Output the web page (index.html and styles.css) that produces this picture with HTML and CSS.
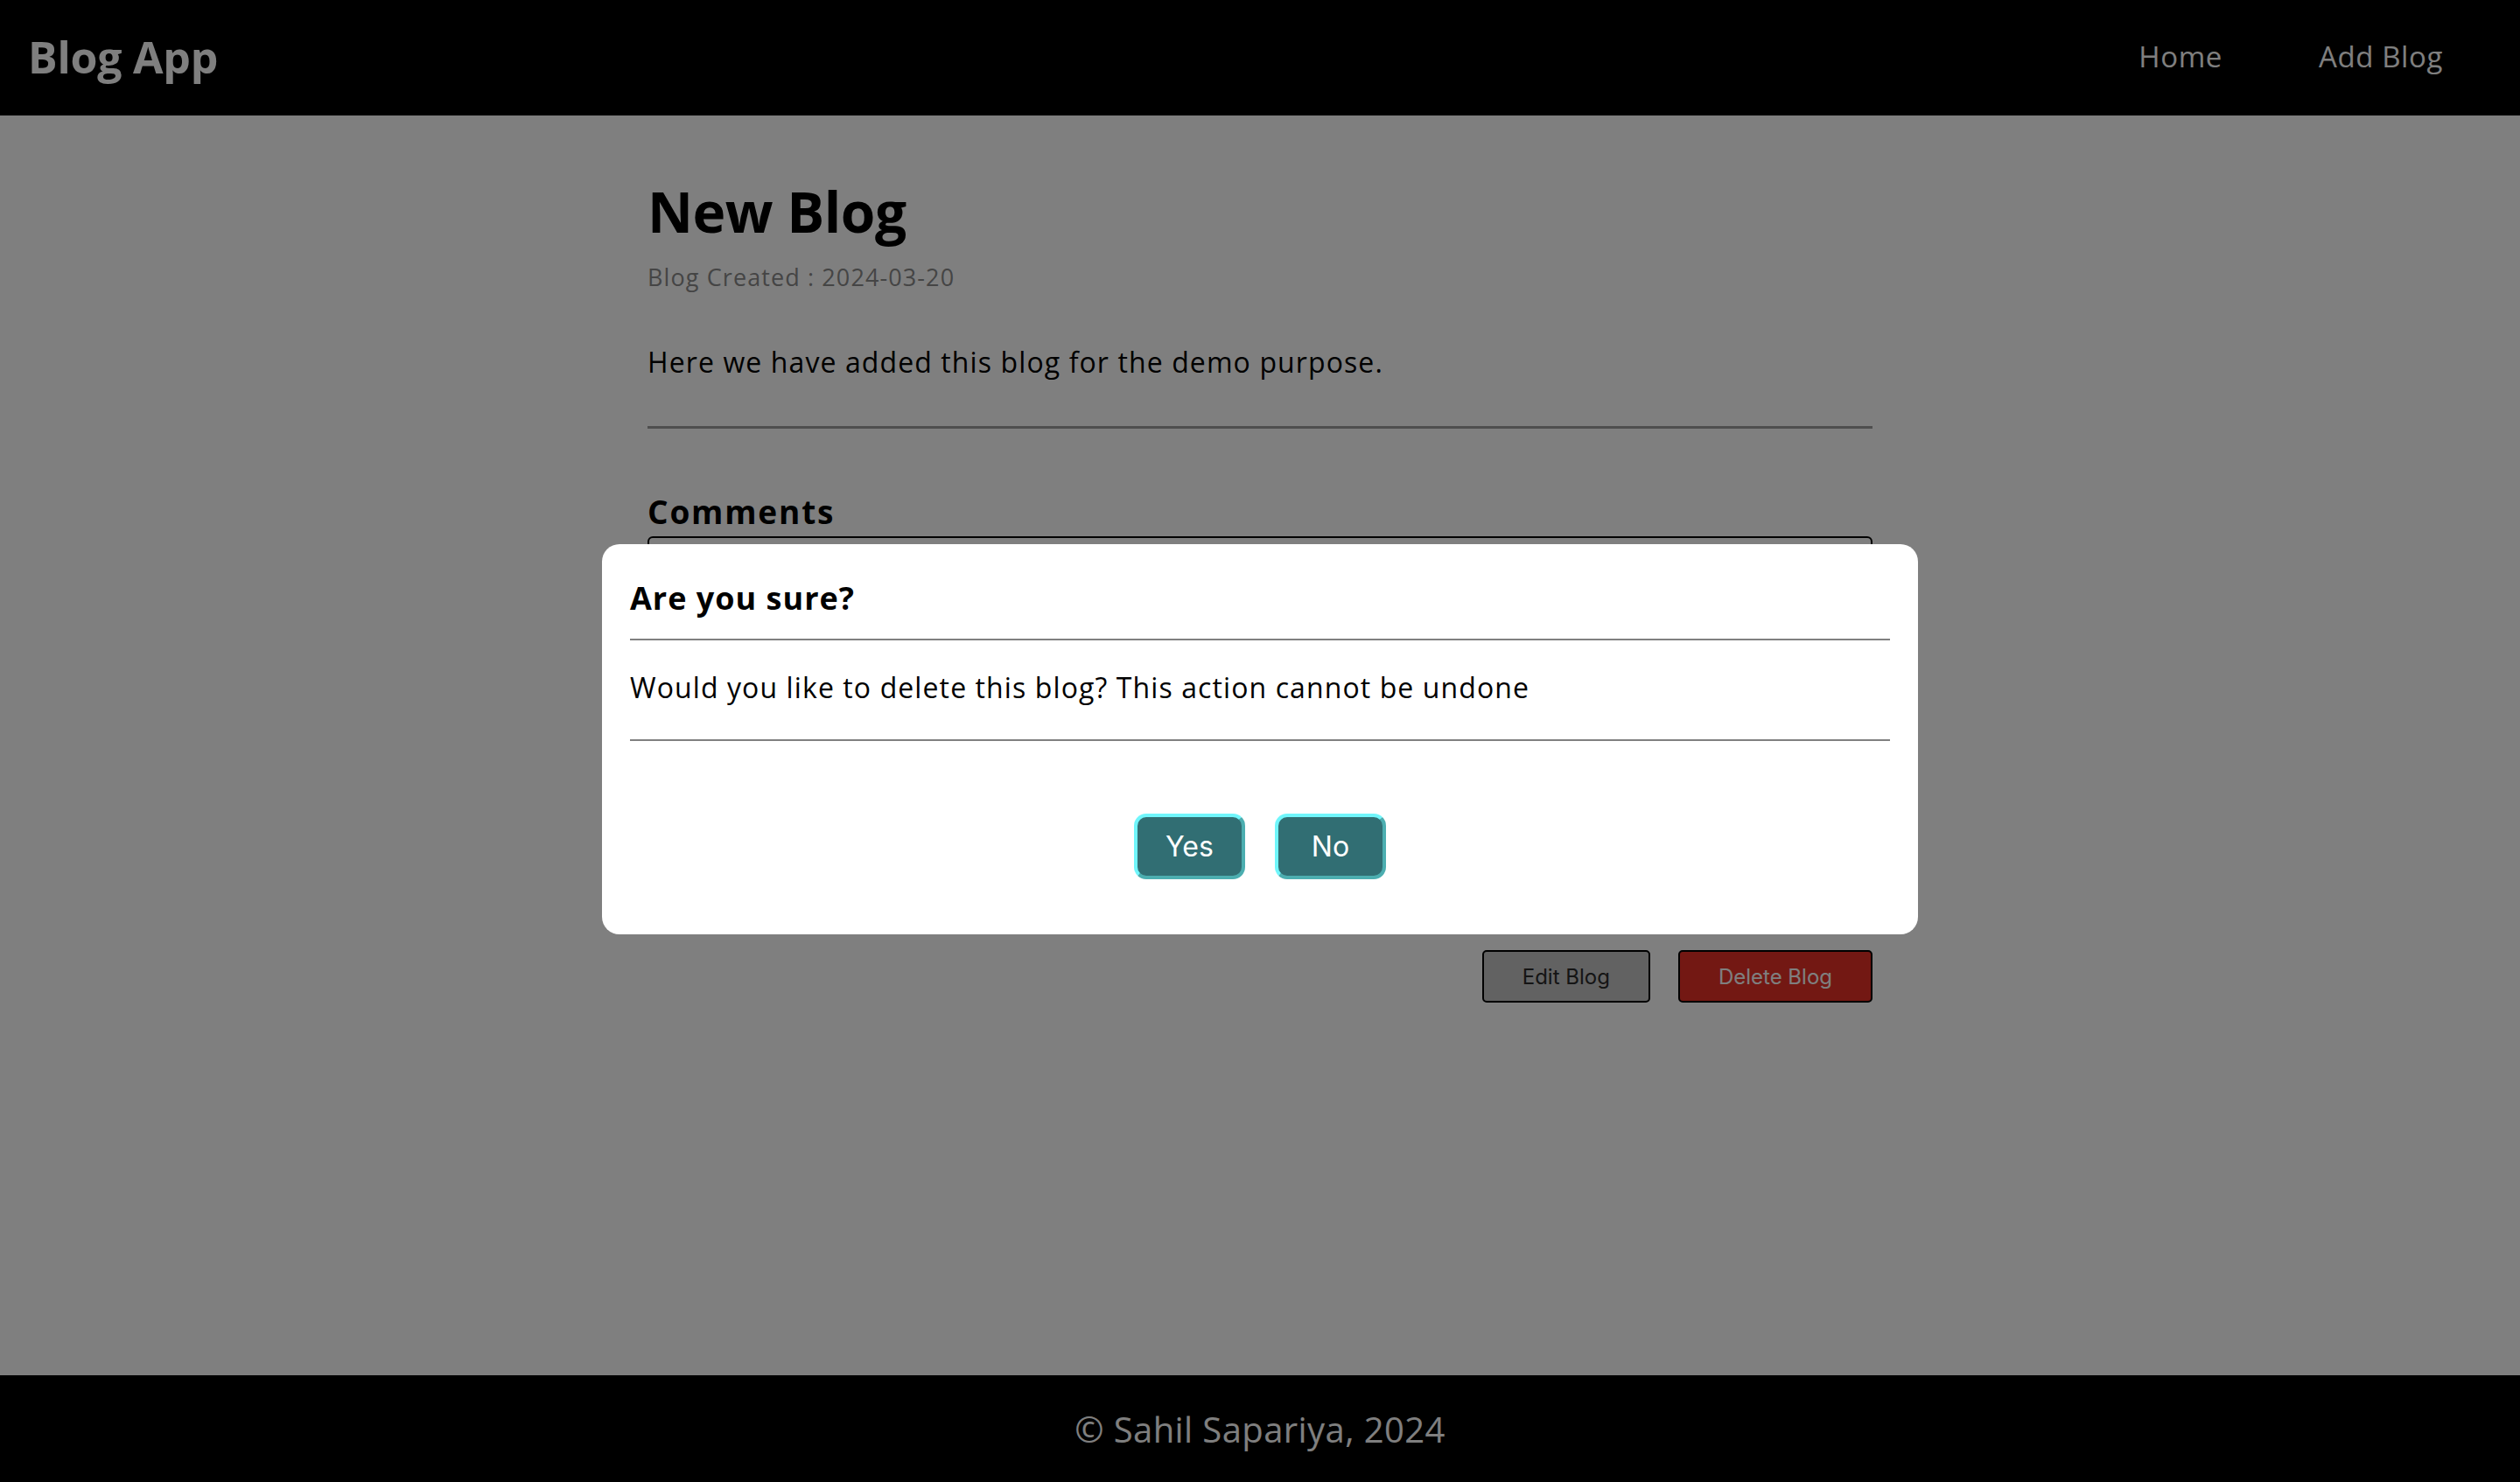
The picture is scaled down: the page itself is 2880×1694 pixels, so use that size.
FILE: index.html
```html
<!DOCTYPE html>
<html lang="en">
<head>
<meta charset="utf-8">
<title>Blog App</title>
<link rel="stylesheet" href="styles.css">
</head>
<body>
<header class="topbar">
  <a class="logo" href="#">Blog App</a>
  <nav class="nav">
    <a href="#">Home</a>
    <a href="#">Add Blog</a>
  </nav>
</header>
<main class="main">
  <article class="post">
    <h1 class="post-title">New Blog</h1>
    <p class="post-date">Blog Created : 2024-03-20</p>
    <p class="post-body">Here we have added this blog for the demo purpose.</p>
    <hr class="divider">
    <h3 class="comments-title">Comments</h3>
    <div class="comments-box"></div>
    <div class="post-actions">
      <button class="btn btn-edit">Edit Blog</button>
      <button class="btn btn-delete">Delete Blog</button>
    </div>
  </article>
</main>
<footer class="footer">© Sahil Sapariya, 2024</footer>

<div class="overlay">
  <div class="modal">
    <h3 class="modal-title">Are you sure?</h3>
    <p class="modal-text">Would you like to delete this blog? This action cannot be undone</p>
    <div class="modal-actions">
      <button class="mbtn">Yes</button>
      <button class="mbtn">No</button>
    </div>
  </div>
</div>
</body>
</html>
```
FILE: styles.css
```css
* { box-sizing: border-box; }
html, body { margin: 0; padding: 0; }
body {
  font-family: "Open Sans", "Noto Sans", sans-serif;
  background: #ffffff;
  color: #000;
  min-height: 100vh;
  display: flex;
  flex-direction: column;
}
.topbar {
  height: 132px;
  background: #000;
  display: flex;
  align-items: center;
  justify-content: space-between;
  padding: 0 88px 3px 32px;
}
.logo {
  color: #fff;
  text-decoration: none;
  font-weight: 700;
  font-size: 50px;
  letter-spacing: -0.2px;
}
.nav { display: flex; gap: 110px; }
.nav a {
  color: #fff;
  text-decoration: none;
  font-size: 33px;
  letter-spacing: 0.6px;
}
.main { flex: 1; }
.post {
  width: 1400px;
  margin: 0 auto;
  padding-top: 62px;
}
.post-title {
  margin: 0;
  font-size: 64px;
  line-height: 96px;
  font-weight: 700;
  letter-spacing: -0.5px;
}
.post-date {
  margin: 8px 0 0;
  font-size: 27px;
  line-height: 38.4px;
  letter-spacing: 1.1px;
  color: #8a8a8a;
}
.post-body {
  margin: 54px 0 0;
  font-size: 32px;
  line-height: 48px;
  letter-spacing: 1.1px;
}
.divider {
  margin: 49px 0 0;
  border: 0;
  border-top: 3px solid #9c9c9c;
  height: 0;
}
.comments-title {
  margin: 68px 0 0;
  font-size: 37px;
  line-height: 54px;
  font-weight: 700;
  letter-spacing: 1.8px;
}
.comments-box {
  margin-top: 1px;
  height: 420px;
  border: 2px solid #000;
  border-radius: 6px;
}
.post-actions {
  display: flex;
  justify-content: flex-end;
  gap: 32px;
  margin-top: 53px;
}
.btn {
  height: 60px;
  padding: 0 44px;
  border: 2px solid #000;
  border-radius: 5px;
  font-family: Inter, "Liberation Sans", sans-serif;
  font-size: 24px;
}
.btn-edit { background: #c4c4c4; color: #2a2a2a; }
.btn-delete { background: #e63026; color: #fff; }
.footer {
  height: 122px;
  background: #000;
  color: #fff;
  display: flex;
  align-items: center;
  justify-content: center;
  font-size: 40px;
  letter-spacing: 0.4px;
}
.overlay {
  position: fixed;
  inset: 0;
  background: rgba(0, 0, 0, 0.5);
  display: flex;
  align-items: center;
  justify-content: center;
}
.modal {
  width: 50%;
  box-sizing: content-box;
  padding: 35px 32px 63px;
  background: #fff;
  border-radius: 20px;
  transform: translateY(-2px);
}
.modal-title {
  margin: 0;
  font-size: 36px;
  line-height: 54px;
  font-weight: 700;
  letter-spacing: 1px;
  padding-bottom: 19px;
  border-bottom: 2px solid #808080;
}
.modal-text {
  margin: 0;
  padding: 30px 0 35px;
  font-size: 32px;
  line-height: 48px;
  letter-spacing: 1.1px;
  border-bottom: 2px solid #808080;
}
.modal-actions {
  display: flex;
  justify-content: center;
  gap: 34px;
  margin-top: 83px;
}
.mbtn {
  width: 127px;
  height: 75px;
  background: #316e73;
  color: #fff;
  border: 4px solid;
  border-color: #70f6fb #4caeb0 #4caeb0 #70f6fb;
  border-radius: 14px;
  font-family: Inter, "Liberation Sans", sans-serif;
  font-size: 32px;
}
```
